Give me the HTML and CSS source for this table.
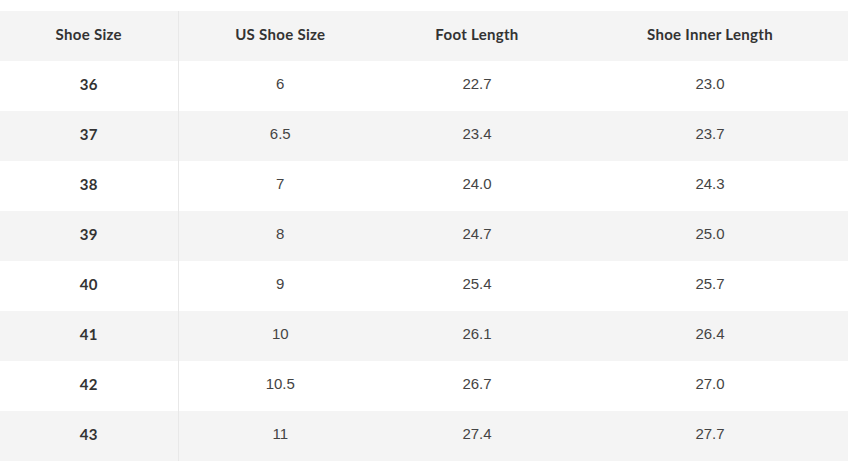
FILE: index.html
```html
<!DOCTYPE html>
<html>
<head>
<meta charset="utf-8">
<link rel="stylesheet" href="styles.css">
</head>
<body>
<table class="size-table">
  <colgroup>
    <col class="c1"><col class="c2"><col class="c3"><col class="c4">
  </colgroup>
  <thead>
    <tr><th class="first">Shoe Size</th><th>US Shoe Size</th><th>Foot Length</th><th>Shoe Inner Length</th></tr>
  </thead>
  <tbody>
    <tr><td class="first">36</td><td>6</td><td>22.7</td><td>23.0</td></tr>
    <tr><td class="first">37</td><td>6.5</td><td>23.4</td><td>23.7</td></tr>
    <tr><td class="first">38</td><td>7</td><td>24.0</td><td>24.3</td></tr>
    <tr><td class="first">39</td><td>8</td><td>24.7</td><td>25.0</td></tr>
    <tr><td class="first">40</td><td>9</td><td>25.4</td><td>25.7</td></tr>
    <tr><td class="first">41</td><td>10</td><td>26.1</td><td>26.4</td></tr>
    <tr><td class="first">42</td><td>10.5</td><td>26.7</td><td>27.0</td></tr>
    <tr><td class="first">43</td><td>11</td><td>27.4</td><td>27.7</td></tr>
  </tbody>
</table>
</body>
</html>
```
FILE: styles.css
```css
html, body {
  margin: 0;
  padding: 0;
  background: #ffffff;
}
body {
  padding-top: 11px;
}
.size-table {
  width: 848px;
  border-collapse: collapse;
  table-layout: fixed;
}
.c1 { width: 178px; }
.c2 { width: 204px; }
.c3 { width: 190px; }
.c4 { width: 276px; }
.size-table th,
.size-table td {
  height: 50px;
  box-sizing: border-box;
  padding: 0 0 4px 0;
  text-align: center;
  vertical-align: middle;
  line-height: 18px;
}
.size-table th {
  font-family: Lato, "Noto Sans", sans-serif;
  font-weight: 700;
  font-size: 15px;
  letter-spacing: 0.3px;
  color: #333333;
  background: #f4f4f4;
}
.size-table td {
  font-family: "Liberation Sans", Arial, sans-serif;
  font-size: 15px;
  color: #444444;
}
.size-table td.first {
  font-family: Lato, "Noto Sans", sans-serif;
  font-weight: 700;
  font-size: 15px;
  letter-spacing: 0.3px;
  color: #333333;
}
.size-table .first {
  border-right: 1px solid #e8e8e8;
}
.size-table tbody tr:nth-child(even) {
  background: #f4f4f4;
}
```
